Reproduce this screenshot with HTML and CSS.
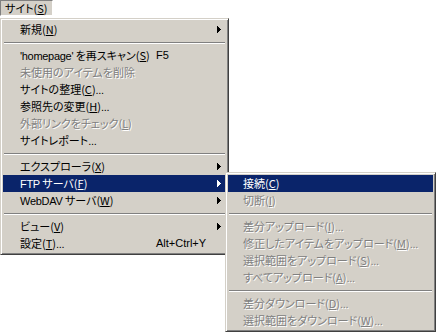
FILE: index.html
```html
<!DOCTYPE html>
<html lang="ja">
<head>
    <meta charset="UTF-8">
    <meta name="viewport" content="width=device-width, initial-scale=1.0">
    <title>サイト メニュー</title>
    <link rel="stylesheet" href="styles.css">
</head>
<body>
    <div class="screen">
        <div class="menubar">
            <span class="tab">サイト(<u>S</u>)</span>
        </div>

        <div class="menu main">
            <div class="item">
                <span class="label">新規(<u>N</u>)</span>
                <svg class="arrow" width="4" height="7" viewBox="0 0 4 7"><path d="M0 0h1v7h-1z M1 1h1v5h-1z M2 2h1v3h-1z M3 3h1v1h-1z"/></svg>
            </div>
            <div class="sep"></div>
            <div class="item">
                <span class="label"><span class="en">'homepage'</span> を再スキャン(<u>S</u>)</span>
                <span class="key en">F5</span>
            </div>
            <div class="item off">
                <span class="label">未使用のアイテムを削除</span>
            </div>
            <div class="item">
                <span class="label">サイトの整理(<u>C</u>)<span class="en">...</span></span>
            </div>
            <div class="item">
                <span class="label">参照先の変更(<u>H</u>)<span class="en">...</span></span>
            </div>
            <div class="item off">
                <span class="label">外部リンクをチェック(<u>L</u>)</span>
            </div>
            <div class="item">
                <span class="label">サイトレポート<span class="en">...</span></span>
            </div>
            <div class="sep"></div>
            <div class="item">
                <span class="label">エクスプローラ(<u>X</u>)</span>
                <svg class="arrow" width="4" height="7" viewBox="0 0 4 7"><path d="M0 0h1v7h-1z M1 1h1v5h-1z M2 2h1v3h-1z M3 3h1v1h-1z"/></svg>
            </div>
            <div class="item on">
                <span class="label"><span class="en">FTP</span> サーバ(<u>F</u>)</span>
                <svg class="arrow" width="4" height="7" viewBox="0 0 4 7"><path d="M0 0h1v7h-1z M1 1h1v5h-1z M2 2h1v3h-1z M3 3h1v1h-1z"/></svg>
            </div>
            <div class="item">
                <span class="label"><span class="en">WebDAV</span> サーバ(<u>W</u>)</span>
                <svg class="arrow" width="4" height="7" viewBox="0 0 4 7"><path d="M0 0h1v7h-1z M1 1h1v5h-1z M2 2h1v3h-1z M3 3h1v1h-1z"/></svg>
            </div>
            <div class="sep"></div>
            <div class="item">
                <span class="label">ビュー(<u>V</u>)</span>
                <svg class="arrow" width="4" height="7" viewBox="0 0 4 7"><path d="M0 0h1v7h-1z M1 1h1v5h-1z M2 2h1v3h-1z M3 3h1v1h-1z"/></svg>
            </div>
            <div class="item">
                <span class="label">設定(<u>T</u>)<span class="en">...</span></span>
                <span class="key en">Alt+Ctrl+Y</span>
            </div>
        </div>

        <!-- FTP サーバ のサブメニュー -->
        <div class="menu sub">
            <div class="item on">
                <span class="label">接続(<u>C</u>)</span>
            </div>
            <div class="item off">
                <span class="label">切断(<u>I</u>)</span>
            </div>
            <div class="sep"></div>
            <div class="item off">
                <span class="label">差分アップロード(<u>I</u>)<span class="en">...</span></span>
            </div>
            <div class="item off">
                <span class="label">修正したアイテムをアップロード(<u>M</u>)<span class="en">...</span></span>
            </div>
            <div class="item off">
                <span class="label">選択範囲をアップロード(<u>S</u>)<span class="en">...</span></span>
            </div>
            <div class="item off">
                <span class="label">すべてアップロード(<u>A</u>)<span class="en">...</span></span>
            </div>
            <div class="sep"></div>
            <div class="item off">
                <span class="label">差分ダウンロード(<u>D</u>)<span class="en">...</span></span>
            </div>
            <div class="item off">
                <span class="label">選択範囲をダウンロード(<u>W</u>)<span class="en">...</span></span>
            </div>
        </div>
    </div>
</body>
</html>
```

FILE: styles.css
```css
body {
    margin: 0;
    background-color: #fff;
    font-family: "Noto Sans CJK JP", sans-serif;
    font-size: 11px;
    font-feature-settings: "palt";
    color: #000;
}
.screen {
    position: relative;
    height: 333px;
    overflow: hidden;
}
.menubar {
    display: flex;
    height: 16px;
    margin-bottom: 2px;
}
.tab {
    display: block;
    height: 16px;
    padding: 0 4px 0 4px;
    box-sizing: border-box;
    background-color: #d4d0c8;
    border-top: 1px solid #808080;
    border-left: 1px solid #808080;
    border-right: 1px solid #fff;
    border-bottom: 1px solid #fff;
    line-height: 14px;
    white-space: nowrap;
}
.en {
    font-family: "Liberation Sans", sans-serif;
    font-size: 11px;
    letter-spacing: -0.3px;
}
u {
    text-underline-offset: 1px;
}
.menu {
    background-color: #d4d0c8;
    border: 1px solid;
    border-color: #d4d0c8 #404040 #404040 #d4d0c8;
    box-shadow: inset 1px 1px 0 #fff, inset -1px -1px 0 #808080;
    padding: 2px;
    box-sizing: border-box;
}
.main {
    width: 229px;
}
.sub {
    position: absolute;
    left: 225px;
    top: 172px;
    width: 211px;
}
.item {
    display: flex;
    align-items: center;
    height: 17px;
    line-height: 17px;
    padding-left: 17px;
    padding-right: 5px;
    white-space: nowrap;
}
.sub .item {
    padding-left: 15px;
}
.label {
    width: 136px;
    flex-shrink: 0;
}
.sub .label {
    width: auto;
}
.key {
    letter-spacing: 0;
}
.arrow {
    margin-left: auto;
    fill: currentColor;
}
.on {
    background-color: #0a246a;
    color: #fff;
}
.off {
    color: #808080;
    text-shadow: 1px 1px 0 #fff;
}
.sep {
    height: 2px;
    margin: 4px 1px 3px;
    border-top: 1px solid #808080;
    border-bottom: 1px solid #fff;
    box-sizing: border-box;
}
```
